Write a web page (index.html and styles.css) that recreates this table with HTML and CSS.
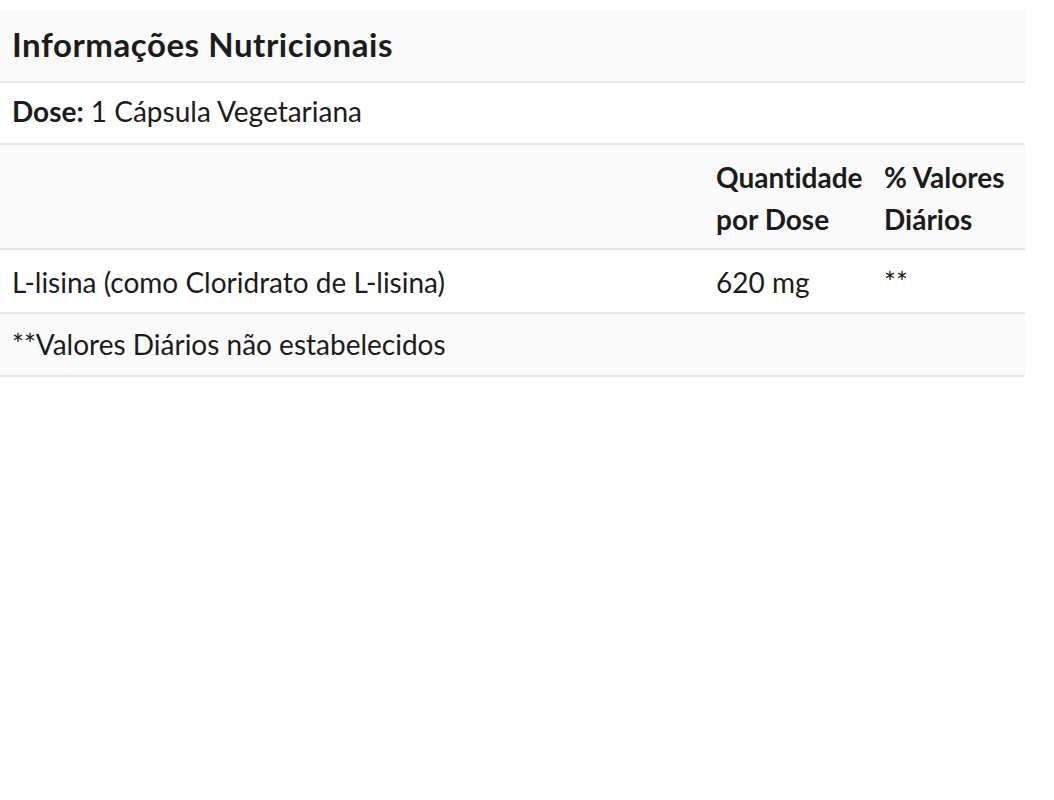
FILE: index.html
```html
<!DOCTYPE html>
<html lang="pt">
<head>
<meta charset="utf-8">
<link rel="stylesheet" href="styles.css">
</head>
<body>
<table class="facts">
  <colgroup>
    <col class="col-name">
    <col class="col-amt">
    <col class="col-dv">
  </colgroup>
  <thead>
    <tr class="row-title shaded"><th colspan="3">Informações Nutricionais</th></tr>
  </thead>
  <tbody>
    <tr class="row-dose"><td colspan="3"><strong>Dose:</strong> 1 Cápsula Vegetariana</td></tr>
    <tr class="row-head shaded">
      <td></td>
      <th>Quantidade por Dose</th>
      <th>% Valores Diários</th>
    </tr>
    <tr class="row-item">
      <td>L-lisina (como Cloridrato de L-lisina)</td>
      <td>620 mg</td>
      <td>**</td>
    </tr>
    <tr class="row-foot shaded"><td colspan="3">**Valores Diários não estabelecidos</td></tr>
  </tbody>
</table>
</body>
</html>
```
FILE: styles.css
```css
html, body {
  margin: 0;
  padding: 0;
  background: #fff;
}
body {
  padding-top: 10px;
  font-family: Lato, "Liberation Sans", sans-serif;
  font-variant-ligatures: none;
  color: #1c1c1c;
}
.facts {
  width: 1025px;
  border-collapse: collapse;
  table-layout: fixed;
}
.col-name { width: 704px; }
.col-amt { width: 168px; }
.col-dv { width: 153px; }
.facts th, .facts td {
  text-align: left;
  vertical-align: top;
  padding: 0 12px;
  border-bottom: 2px solid #e6e6e6;
  font-size: 28px;
  line-height: 42px;
}
.facts th { font-weight: 700; }
.shaded { background: #fafafa; }
.facts .row-title th {
  font-size: 33px;
  letter-spacing: 0.55px;
  padding-top: 13px;
  padding-bottom: 16px;
}
.facts .row-dose td { padding-top: 7px; padding-bottom: 11px; }
.row-dose strong { font-weight: 700; }
.facts .row-head th, .facts .row-head td { padding-top: 11px; padding-bottom: 8px; }
.facts .row-item td { padding-top: 11px; padding-bottom: 9px; }
.facts .row-foot td { padding-top: 9px; padding-bottom: 10px; }
```
